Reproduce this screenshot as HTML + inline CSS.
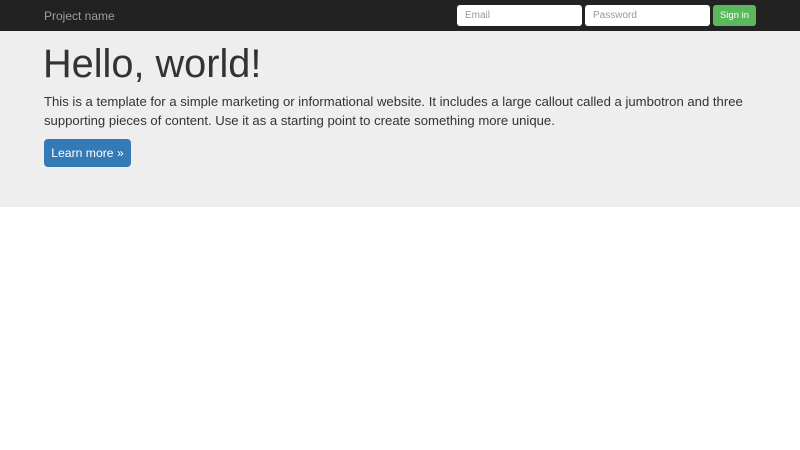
<!DOCTYPE html>
<html><head><style>
body{margin:0;width:800px;height:450px;background:#fff;font-family:"Liberation Sans",sans-serif;position:relative;overflow:hidden}
.nav{position:absolute;left:0;top:0;width:800px;height:31px;background:#222}
.brand{position:absolute;left:44px;top:9px;font-size:12px;color:#9d9d9d}
.in{position:absolute;top:5px;height:21px;background:#fff;border-radius:3px;box-sizing:border-box;padding-left:8px;font-size:10px;color:#999;line-height:22px}
.btn{position:absolute;left:713px;top:5px;width:43px;height:21px;background:#5cb85c;border-radius:3px;color:#fff;font-size:9.5px;text-align:center;line-height:21px}
.jum{position:absolute;left:0;top:31px;width:800px;height:176px;background:#eee}
h1{position:absolute;left:43px;top:40px;margin:0;font-weight:normal;font-size:39.7px;line-height:48px;color:#333}
p{position:absolute;left:44px;top:92px;margin:0;width:720px;font-size:13.12px;line-height:19px;color:#333}
.lm{position:absolute;left:44px;top:139px;width:87px;height:28px;background:#337ab7;border-radius:4px;color:#fff;font-size:12.2px;text-align:center;line-height:28px}
</style></head><body>
<div class="nav"><div class="brand">Project name</div>
<div class="in" style="left:457px;width:125px">Email</div>
<div class="in" style="left:585px;width:125px">Password</div>
<div class="btn">Sign in</div></div>
<div class="jum"></div>
<h1>Hello, world!</h1>
<p>This is a template for a simple marketing or informational website. It includes a large callout called a jumbotron and three supporting pieces of content. Use it as a starting point to create something more unique.</p>
<div class="lm">Learn more »</div>
</body></html>
